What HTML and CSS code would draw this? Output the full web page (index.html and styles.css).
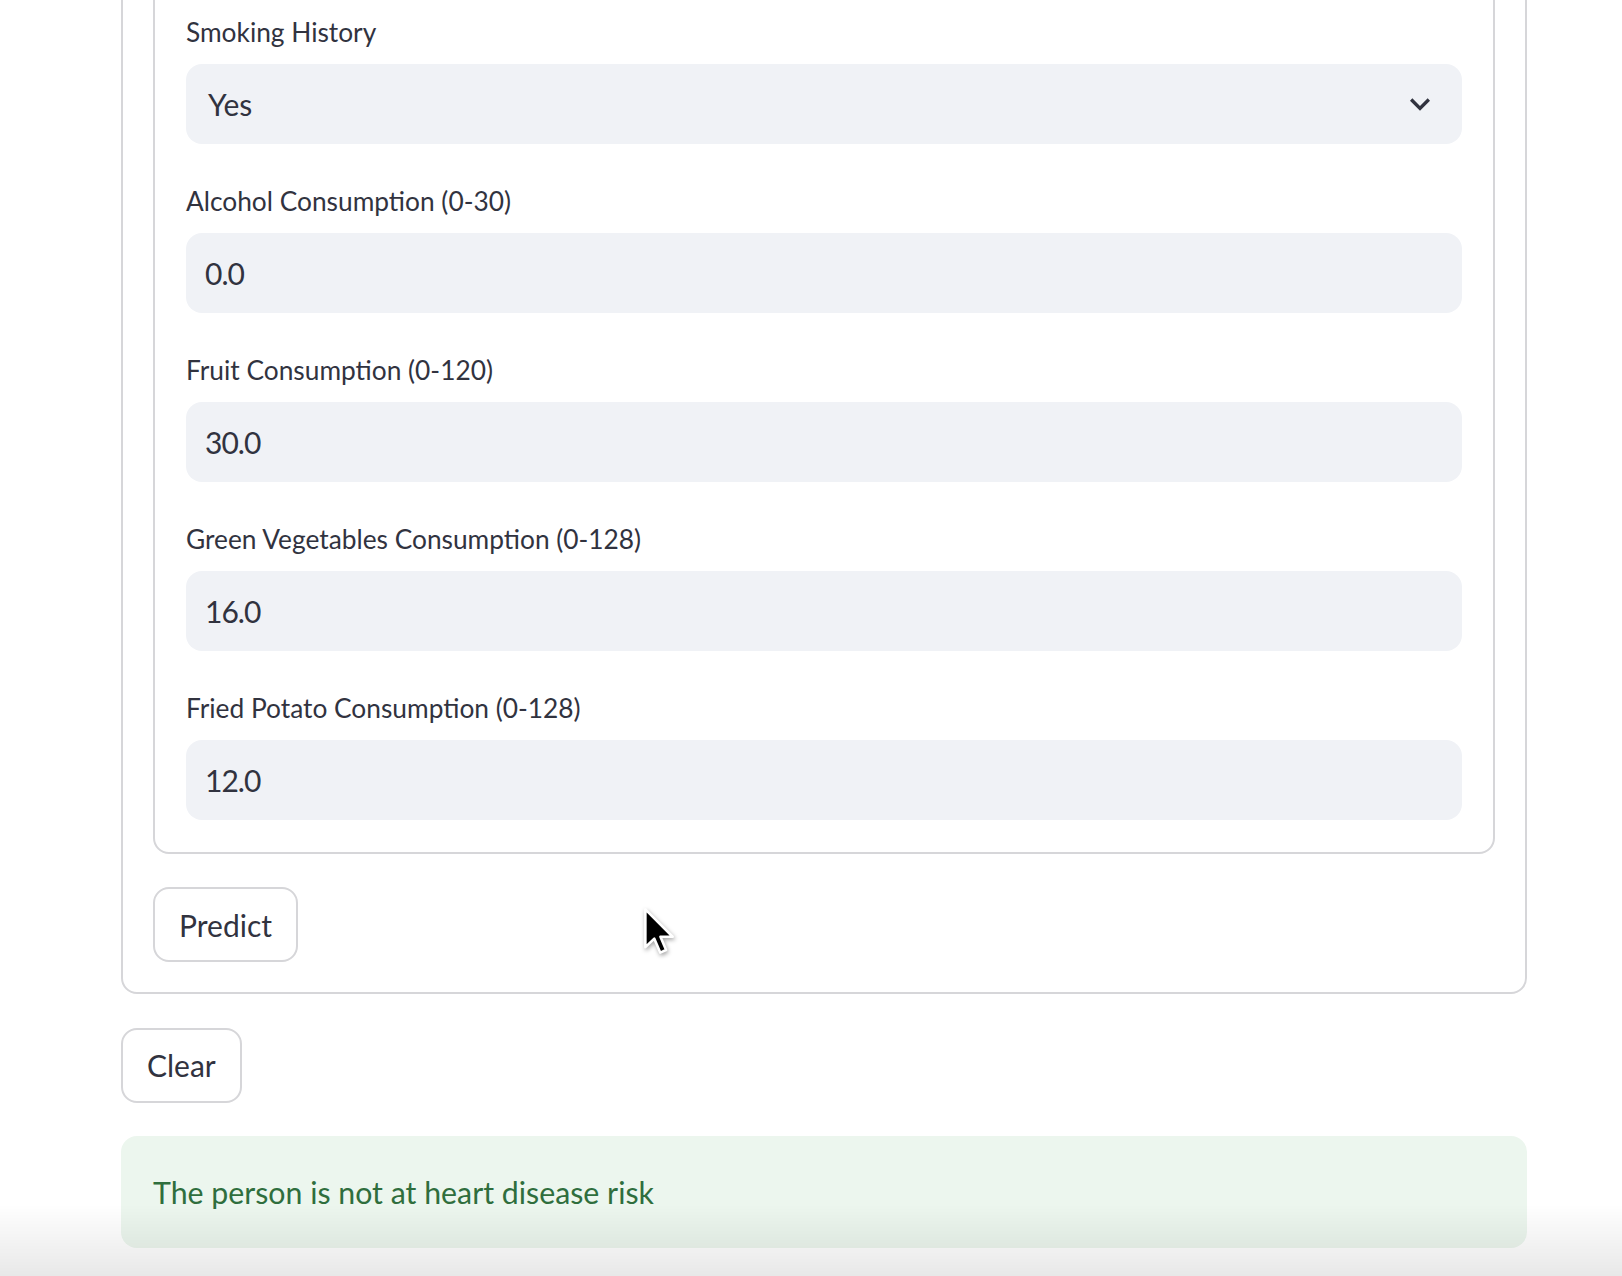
FILE: index.html
```html
<!DOCTYPE html>
<html lang="en">
<head>
<meta charset="utf-8">
<title>Heart Disease Risk</title>
<link rel="stylesheet" href="styles.css">
</head>
<body>
<main class="app">
  <section class="form-outer">
    <div class="form-inner">
      <div class="field">
        <label class="label">Smoking History</label>
        <div class="control select">
          <span>Yes</span>
          <svg class="chevron" viewBox="0 0 24 24" width="40" height="40"><path d="M16.59 8.59L12 13.17 7.41 8.59 6 10l6 6 6-6z" fill="#31333F"/></svg>
        </div>
      </div>
      <div class="field">
        <label class="label">Alcohol Consumption (0-30)</label>
        <div class="control number">0.0</div>
      </div>
      <div class="field">
        <label class="label">Fruit Consumption (0-120)</label>
        <div class="control number">30.0</div>
      </div>
      <div class="field">
        <label class="label">Green Vegetables Consumption (0-128)</label>
        <div class="control number">16.0</div>
      </div>
      <div class="field">
        <label class="label">Fried Potato Consumption (0-128)</label>
        <div class="control number">12.0</div>
      </div>
    </div>
    <button class="btn">Predict</button>
  </section>
  <button class="btn">Clear</button>
  <div class="alert">The person is not at heart disease risk</div>
</main>
<div class="fade"></div>
<svg class="cursor" viewBox="0 0 14 22" width="33" height="52"><path d="M1 1 L1 17 L4.8 13.4 L7.3 19.3 L9.8 18.2 L7.4 12.6 L12.6 12.6 Z" fill="#000" stroke="#fff" stroke-width="1.1" stroke-linejoin="round"/></svg>
</body>
</html>
```
FILE: styles.css
```css
* { box-sizing: border-box; }
html, body { margin: 0; padding: 0; background: #ffffff; }
body {
  font-family: Lato, "Noto Sans", sans-serif;
  color: #31333F;
  height: 1276px;
  overflow: hidden;
}
.app {
  width: 1406px;
  margin: -57px 0 0 121px;
  display: flex;
  flex-direction: column;
  align-items: flex-start;
  gap: 33.5px;
}
.form-outer {
  width: 100%;
  border: 2px solid #d6d6d9;
  border-radius: 16px;
  padding: 30px;
  display: flex;
  flex-direction: column;
  align-items: flex-start;
  gap: 33px;
}
.form-inner {
  width: 100%;
  border: 2px solid #d6d6d9;
  border-radius: 16px;
  padding: 31px 31px 32px;
  display: flex;
  flex-direction: column;
  gap: 33px;
}
.label {
  display: flex;
  align-items: center;
  height: 48px;
  margin-bottom: 8px;
  font-size: 26.3px;
}
.control {
  height: 80px;
  background: #F0F2F6;
  border-radius: 16px;
  display: flex;
  align-items: center;
  font-size: 30px;
  padding-left: 19px;
}
.number {
  letter-spacing: -1px;
}
.select {
  padding-left: 22px;
  padding-right: 22px;
  justify-content: space-between;
}
.chevron { display: block; }
.btn {
  height: 75px;
  padding: 0 24px;
  border: 2px solid #d6d6d9;
  border-radius: 16px;
  background: #ffffff;
  font-family: inherit;
  font-size: 30px;
  color: #31333F;
  display: inline-flex;
  align-items: center;
}
.alert {
  width: 100%;
  height: 112px;
  padding: 0 32px;
  display: flex;
  align-items: center;
  background: #ECF6EE;
  color: #2F6E3D;
  border-radius: 16px;
  font-size: 30.3px;
}
.fade {
  position: fixed;
  left: 0;
  right: 0;
  bottom: 0;
  height: 72px;
  background: linear-gradient(rgba(0,0,0,0), rgba(0,0,0,0.09));
  pointer-events: none;
}
.cursor {
  position: fixed;
  left: 643px;
  top: 907px;
  filter: drop-shadow(1px 2px 2px rgba(0,0,0,0.35));
}
```
